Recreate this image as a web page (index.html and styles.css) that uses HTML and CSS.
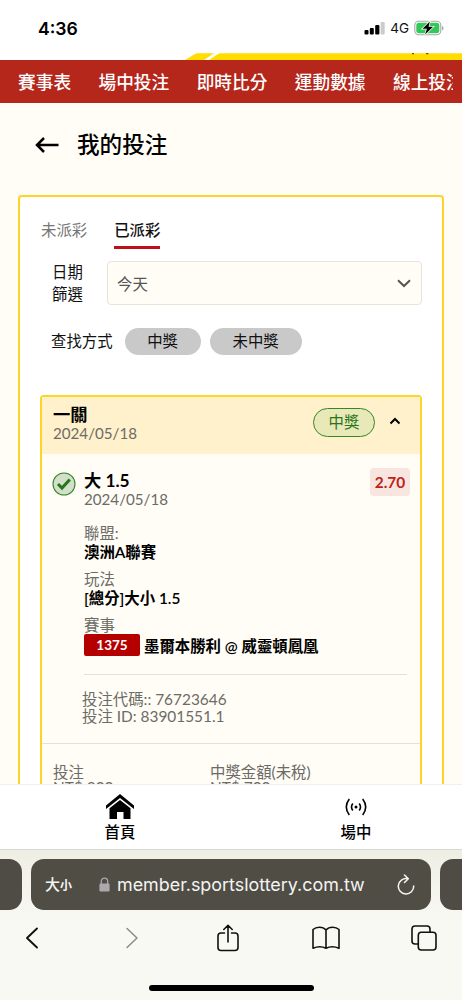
FILE: index.html
```html
<!DOCTYPE html>
<html lang="zh-Hant">
<head>
<meta charset="utf-8">
<meta name="viewport" content="width=device-width">
<title>我的投注</title>
<link rel="stylesheet" href="styles.css">
</head>
<body>
<div class="phone">
  <header class="status">
    <span class="clock">4:36</span>
    <svg class="signal" width="21" height="14" viewBox="0 0 21 14"><rect x="0.5" y="9" width="4" height="4.5" rx="1"/><rect x="5.8" y="7" width="4" height="6.5" rx="1"/><rect x="11.2" y="4" width="4.2" height="9.5" rx="1"/><rect class="dim" x="16.7" y="1" width="4" height="12.5" rx="1"/></svg>
    <span class="network">4G</span>
    <svg class="battery" width="30" height="16" viewBox="0 0 30 16"><rect x="0.8" y="1.3" width="26" height="13.4" rx="4" fill="#fff" stroke="#a9a9a9" stroke-width="1.1"/><rect x="2.3" y="2.8" width="23" height="10.4" rx="2.6" fill="#34c759"/><path d="M28 6v4.4q1.500-.6 1.500-2.200T28 6z" fill="#a9a9a9"/><path d="M15.800 1.500 8.500 8.800h4.400l-1.800 5.700 8-7.700h-4.500z" fill="#000" stroke="#fff" stroke-width="1.500" paint-order="stroke"/></svg>
  </header>
  <svg class="banner" width="462" height="7" viewBox="0 0 462 7"><path d="M185 7 195 1l2-.8h17L204 7zM209 7l9-6 2-.8h242V7z" fill="#ffdd00"/><path d="M412 0h2v1.200h-2zM426 0h2.500v1.200H426z" fill="#6b5f14"/></svg>
  <nav class="topnav">
    <div class="topnav-items"><span>賽事表</span><span>場中投注</span><span>即時比分</span><span>運動數據</span><span>線上投注</span></div>
  </nav>
  <main class="page">
    <div class="title">
      <svg width="24" height="16" viewBox="0 0 24 16"><path d="M23.500 8H1.800M9 1 2 8l7 7" fill="none" stroke="#000" stroke-width="2.500"/></svg>
      <h1>我的投注</h1>
    </div>
    <section class="card">
      <div class="tabs"><span class="tab">未派彩</span><span class="tab active">已派彩</span></div>
      <div class="filter">
        <label class="date-label">日期<br>篩選</label>
        <div class="select"><span>今天</span><svg width="14" height="9" viewBox="0 0 14 9"><path d="m1 1.200 6 5.800 6-5.800" fill="none" stroke="#555" stroke-width="2"/></svg></div>
      </div>
      <div class="search"><span>查找方式</span><span class="chip">中獎</span><span class="chip wide">未中獎</span></div>
      <article class="bet">
        <div class="bet-head">
          <div class="bet-name"><strong>一關</strong><time>2024/05/18</time></div>
          <span class="won">中獎</span>
          <svg width="12" height="8" viewBox="0 0 12 8"><path d="M1.500 6.500 6 2l4.500 4.500" fill="none" stroke="#000" stroke-width="2"/></svg>
        </div>
        <div class="leg">
          <svg class="check" width="24" height="24" viewBox="0 0 24 24"><circle cx="12" cy="12" r="11" fill="#d3e0c9" stroke="#37842d" stroke-width="1.100"/><path d="m6 12 4 4 7.800-8.400" fill="none" stroke="#287519" stroke-width="3"/></svg>
          <div class="leg-body">
            <div class="pick"><div><strong>大 1.5</strong><time>2024/05/18</time></div><b class="odds">2.70</b></div>
            <dl>
              <dt>聯盟:</dt><dd>澳洲A聯賽</dd>
              <dt>玩法</dt><dd>[總分]大小 1.5</dd>
              <dt>賽事</dt><dd class="match"><span class="code">1375</span><span class="teams">墨爾本勝利 @ 威靈頓鳳凰</span></dd>
            </dl>
            <p class="ids">投注代碼:: 76723646<br>投注 ID: 83901551.1</p>
          </div>
        </div>
        <div class="totals"><div><span>投注</span><span class="amount">NT$ 200</span></div><div><span>中獎金額(未稅)</span><span class="amount">NT$ 700</span></div></div>
      </article>
    </section>
  </main>
  <nav class="tabbar">
    <div><svg width="28" height="26" viewBox="0 0 28 26"><path d="M14 0 0 11.500V15l14-11L28 15v-3.500z"/><path d="M14 6 3.500 14.200V25H11v-7h6.500v7h7V14.200z"/></svg><span>首頁</span></div>
    <div><svg width="22" height="26" viewBox="0 0 22 26" fill="none" stroke="#000" stroke-width="1.600"><circle cx="11" cy="13" r="1.500" fill="#000" stroke="none"/><path d="M7.800 9.500q-2.600 3.500 0 7M14.200 9.500q2.600 3.500 0 7M4.300 5q-6 8 0 16M17.700 5q6 8 0 16"/></svg><span>場中</span></div>
  </nav>
  <footer class="browser">
    <div class="address-row">
      <i class="side left"></i>
      <div class="address">
        <span class="aa">大<small>小</small></span>
        <svg class="lock" width="11" height="15" viewBox="0 0 11 15"><path d="M2.300 7V4.300a3.200 3.200 0 0 1 6.400 0V7" fill="none" stroke="#aaa9ad" stroke-width="1.300"/><rect x=".4" y="6.500" width="10.200" height="8" rx="1.300" fill="#aaa9ad"/></svg>
        <span class="url">member.sportslottery.com.tw</span>
        <svg class="reload" width="20" height="22" viewBox="0 0 20 22" fill="none" stroke="#f4f4f2" stroke-width="1.500" stroke-linecap="round" stroke-linejoin="round"><path d="M11.500 4.700A7.700 7.700 0 1 0 17.700 12M8.500 1l3.800 3.700-3.800 3.800"/></svg>
      </div>
      <i class="side right"></i>
    </div>
    <div class="tools">
      <svg width="14" height="22" viewBox="0 0 14 22"><path d="M12 1.500 2 11l10 9.500" stroke-width="1.900"/></svg>
      <svg class="off" width="18" height="22" viewBox="0 0 18 22"><path d="m6 1.500 10 9.500L6 20.500" stroke-width="1.500"/></svg>
      <svg width="22" height="28" viewBox="0 0 22 28"><path d="M7.500 9H4Q1 9 1 12v11.500q0 3 3 3h14q3 0 3-3V12q0-3-3-3h-3.500M11 18V1.500M6.800 5.500 11 1.300l4.200 4.200"/></svg>
      <svg width="28" height="24" viewBox="0 0 28 24"><path d="M14 4C10.500 0 4 .8 1 3.500v18.800q7-3 13 0 6-3 13 0V3.500C24 .8 17.500 0 14 4zv18.300"/></svg>
      <svg width="26" height="26" viewBox="0 0 26 26"><rect x="7.300" y="7.300" width="17.700" height="17.700" rx="3"/><path d="M7 19H4q-3 0-3-3V4q0-3 3-3h12q3 0 3 3v3"/></svg>
    </div>
    <div class="home"></div>
  </footer>
</div>
</body>
</html>
```
FILE: styles.css
```css
* { box-sizing: border-box; }
body { margin: 0; background: #fff; font-family: Lato, "Noto Sans CJK TC", sans-serif; font-size: 15.4px; color: #111; }
svg { display: block; flex: none; }
.phone { width: 462px; height: 1000px; display: flex; flex-direction: column; overflow: hidden; }
.status { height: 53px; flex: none; display: flex; align-items: center; padding: 3px 18px 0 38px; font-family: Inter, sans-serif; }
.clock { font-size: 17.600px; font-weight: 600; flex: 1; color: #000; }
.signal .dim { fill: #cbcbcb; }
.network { font-size: 13.500px; margin: 0 5px; }
.banner { flex: none; }
.topnav { height: 43px; flex: none; background: #b5261b; padding: 0 9px 0 18px; }
.topnav-items { display: flex; gap: 27.400px; overflow: hidden; white-space: nowrap; font: 500 17.700px/42px "Noto Sans CJK TC", sans-serif; color: #fff; }
.page { flex: 1; min-height: 0; overflow: hidden; background: #fffdf5; padding: 22px 18px 0; }
.title { height: 40px; display: flex; align-items: center; gap: 18px; padding-left: 17px; }
h1 { margin: -2px 0 0; font: 500 22.600px/40px "Noto Sans CJK TC", sans-serif; color: #000; }
.card { width: 426px; height: 700px; margin-top: 30px; border: 2px solid #ffd42a; border-radius: 4px; background: #fff; padding: 22px 20px 0; }
.tabs { display: flex; gap: 27px; height: 42px; padding-left: 1px; }
.tab { height: 30px; line-height: 23px; color: #757575; }
.active { color: #111; font-weight: 500; border-bottom: 3px solid #bd1019; }
.filter { display: flex; height: 44px; padding-left: 12px; }
.date-label { width: 55px; line-height: 22px; }
.select { flex: 1; border: 1px solid #e9e4da; border-radius: 4px; background: #fffdf5; display: flex; justify-content: space-between; align-items: center; padding: 0 10px 0 9px; color: #555; }
.search { display: flex; height: 27px; margin-top: 23px; padding-left: 11px; line-height: 27px; }
.chip { width: 76px; margin-left: 12px; border-radius: 14px; background: #c9c9c9; text-align: center; }
.wide { width: 92px; margin-left: 9px; }
.bet { width: 382px; margin-top: 40px; border: 2px solid #ffd42a; border-radius: 4px; background: #fffdf5; color: #6c6b68; }
.bet-head { height: 57px; display: flex; align-items: center; background: #fff1cb; padding: 0 19px 0 11px; }
.bet-name { flex: 1; margin-top: -4px; }
strong, time { display: block; }
strong { color: #000; font-size: 17.300px; line-height: 20px; }
time { font-size: 15.150px; line-height: 17px; }
.won { width: 62px; height: 29px; margin-right: 14px; border: 1px solid #37842d; border-radius: 15px; background: #e9e8b8; color: #287519; text-align: center; line-height: 27px; margin-top: -6px; }
.bet-head svg { margin-top: -10px; }
.leg { display: flex; padding: 14px 10px 0 10px; height: 290px; border-bottom: 1px solid #e4e1da; }
.check { margin-top: 4px; }
.leg-body { flex: 1; margin-left: 8px; }
.pick { display: flex; justify-content: space-between; height: 56px; padding-top: 3px; }
.pick strong { line-height: 20px; }
.odds { width: 40px; height: 28px; margin-top: -3px; border-radius: 4px; background: #f8e5e0; color: #bd2219; text-align: center; line-height: 28px; }
dl { margin: 0; height: 151px; margin-right: 3px; border-bottom: 1px solid #e4e1da; }
dt { line-height: 18px; }
dd { margin: 0 0 8px; line-height: 20px; color: #000; font-weight: 600; }
.match { display: flex; gap: 4px; }
.code { width: 56px; height: 22px; background: #b50000; border-radius: 2px; color: #fff; font-size: 13.500px; font-weight: 700; text-align: center; line-height: 23px; }
.teams { line-height: 24px; }
.ids { margin: 16px 0 0 -2px; line-height: 17px; }
.totals { display: flex; padding: 19px 11px; }
.totals div { width: 157px; }
.totals span { display: block; line-height: 18px; }
.totals .amount { line-height: 13px; }
.tabbar { height: 66px; flex: none; display: flex; border-top: 1px solid #efefef; border-bottom: 1px solid #d8d8d4; background: #fff; padding: 0 0 0 2px; }
.tabbar div { width: 236px; flex: none; display: flex; flex-direction: column; align-items: center; padding-top: 9px; font-weight: 500; line-height: 25px; color: #000; }
.browser { height: 150px; flex: none; background: linear-gradient(#efeee5, #f9f9f4 50%); }
.address-row { display: flex; gap: 9px; padding-top: 9px; height: 60px; }
.side { flex: 1; background: #4e4c45; }
.left { border-radius: 0 13px 13px 0; }
.right { border-radius: 13px 0 0 13px; }
.address { width: 400px; display: flex; align-items: center; background: #504d45; border-radius: 13px; color: #f4f4f2; padding: 0 15px 0 14px; }
.aa { font: 500 15px/30px "Noto Sans CJK TC", sans-serif; width: 54px; }
.aa small { font-size: 12px; font-weight: 700; }
.url { font: 17.900px Inter, sans-serif; margin-left: 7px; flex: 1; white-space: nowrap; }
.tools { display: grid; grid-template-columns: repeat(5, 98px); justify-content: center; justify-items: center; align-items: center; width: 490px; margin-left: -17px; height: 55px; fill: none; stroke: #111; stroke-width: 1.600; stroke-linecap: round; stroke-linejoin: round; }
.tools .off { stroke: #8b8b88; }
.home { width: 165px; height: 6px; margin: 20px auto 0; border-radius: 3px; background: #000; }
```
